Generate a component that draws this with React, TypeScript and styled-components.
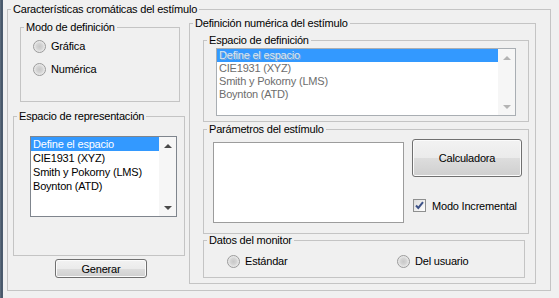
import React from "react";
import styled, { createGlobalStyle } from "styled-components";

const GlobalStyle = createGlobalStyle`
  html, body {
    margin: 0;
    padding: 0;
    background: #f0f0f0;
  }
  body {
    font-family: "Liberation Sans", Arial, sans-serif;
    font-size: 11px;
    letter-spacing: -0.2px;
    color: #000000;
  }
`;

const espacios = ["Define el espacio", "CIE1931 (XYZ)", "Smith y Pokorny (LMS)", "Boynton (ATD)"];

function Radio({ label }: { label: string }) {
  return (
    <RadioRow>
      <RadioDot />
      <span>{label}</span>
    </RadioRow>
  );
}

function ListBox(props: { w: number; h: number; rowH: number; disabled?: boolean }) {
  return (
    <ListFrame $w={props.w} $h={props.h} $disabled={props.disabled}>
      <ListItems>
        {espacios.map((item, i) => (
          <ListItem key={item} $rowH={props.rowH} $selected={i === 0} $disabled={props.disabled}>
            {item}
          </ListItem>
        ))}
      </ListItems>
      <ScrollBar>
        <ScrollButton>
          <Arrow $up $disabled={props.disabled} />
        </ScrollButton>
        <ScrollButton>
          <Arrow $disabled={props.disabled} />
        </ScrollButton>
      </ScrollBar>
    </ListFrame>
  );
}

export default function App() {
  return (
    <Window>
      <GlobalStyle />
      <Strip />
      <Main>
        <OuterGroup $w={544} $h={288}>
          <Legend>Características cromáticas del estímulo</Legend>
          <OuterBody>
            <LeftCol>
              <ModoGroup $w={160} $h={81}>
                <Legend>Modo de definición</Legend>
                <RadioStack>
                  <Radio label="Gráfica" />
                  <Radio label="Numérica" />
                </RadioStack>
              </ModoGroup>
              <RepresentacionGroup $w={172} $h={146}>
                <Legend>Espacio de representación</Legend>
                <RepresentacionBody>
                  <ListBox w={147} h={81} rowH={14} />
                </RepresentacionBody>
              </RepresentacionGroup>
              <GenerarButton>Generar</GenerarButton>
            </LeftCol>
            <NumericaGroup $w={347} $h={267}>
              <Legend>Definición numérica del estímulo</Legend>
              <NumericaBody>
                <DefinicionGroup $w={326} $h={88}>
                  <Legend>Espacio de definición</Legend>
                  <DefinicionBody>
                    <ListBox w={300} h={68} rowH={13} disabled />
                  </DefinicionBody>
                </DefinicionGroup>
                <ParametrosGroup $w={326} $h={111}>
                  <Legend>Parámetros del estímulo</Legend>
                  <ParametrosBody>
                    <ParamBox />
                    <SideCol>
                      <CalcButton>Calculadora</CalcButton>
                      <CheckRow>
                        <CheckBox>
                          <svg width="11" height="11" viewBox="0 0 11 11">
                            <path d="M2 5.5 L4.3 8 L9 2.2" fill="none" stroke="#3d5288" strokeWidth="2" />
                          </svg>
                        </CheckBox>
                        <span>Modo Incremental</span>
                      </CheckRow>
                    </SideCol>
                  </ParametrosBody>
                </ParametrosGroup>
                <MonitorGroup $w={322} $h={44}>
                  <Legend>Datos del monitor</Legend>
                  <MonitorBody>
                    <Radio label="Estándar" />
                    <Radio label="Del usuario" />
                  </MonitorBody>
                </MonitorGroup>
              </NumericaBody>
            </NumericaGroup>
          </OuterBody>
        </OuterGroup>
      </Main>
    </Window>
  );
}

const Window = styled.div`
  display: flex;
  width: 559px;
  height: 298px;
  background: #f0f0f0;
  overflow: hidden;
`;

const Strip = styled.div`
  width: 3px;
  background: linear-gradient(90deg, #6f7d8c 0, #465668 1px, #4d5d70 3px);
`;

const Main = styled.div`
  padding: 3px 0 0 4px;
`;

const Group = styled.fieldset<{ $w: number; $h: number }>`
  box-sizing: border-box;
  width: ${(p) => p.$w}px;
  height: ${(p) => p.$h}px;
  min-width: 0;
  margin: 0;
  padding: 0;
  border: 1px solid #c4c4c4;
`;

const Legend = styled.legend`
  margin-left: 3px;
  padding: 0 2px;
  font-size: 11px;
  line-height: 13px;
`;

const OuterGroup = styled(Group)``;

const OuterBody = styled.div`
  display: flex;
  padding-left: 5px;
`;

const LeftCol = styled.div`
  display: flex;
  flex-direction: column;
  width: 172px;
`;

const ModoGroup = styled(Group)`
  margin: 5px 0 0 7px;
`;

const RadioStack = styled.div`
  display: flex;
  flex-direction: column;
  gap: 10px;
  padding: 6px 0 0 12px;
`;

const RadioRow = styled.label`
  display: flex;
  align-items: center;
  gap: 5px;
  height: 13px;
  line-height: 13px;
`;

const RadioDot = styled.span`
  box-sizing: border-box;
  width: 13px;
  height: 13px;
  border-radius: 50%;
  border: 1px solid #9a9a9a;
  background: radial-gradient(circle, #c8c8c8 0, #d4d4d4 3px, #e6e6e6 5px, #f4f4f4 6px);
`;

const RepresentacionGroup = styled(Group)`
  margin-top: 8px;
`;

const RepresentacionBody = styled.div`
  padding: 13px 0 0 16px;
`;

const ListFrame = styled.div<{ $w: number; $h: number; $disabled?: boolean }>`
  box-sizing: border-box;
  display: flex;
  width: ${(p) => p.$w}px;
  height: ${(p) => p.$h}px;
  border: 1px solid ${(p) => (p.$disabled ? "#a9aeb3" : "#7f858d")};
  background: #ffffff;
`;

const ListItems = styled.div`
  flex: 1;
`;

const ListItem = styled.div<{ $rowH: number; $selected?: boolean; $disabled?: boolean }>`
  height: ${(p) => p.$rowH}px;
  line-height: ${(p) => p.$rowH}px;
  padding-left: 2px;
  white-space: nowrap;
  background: ${(p) => (p.$selected ? "#3399ff" : "transparent")};
  color: ${(p) => (p.$selected ? (p.$disabled ? "#dde6ef" : "#ffffff") : p.$disabled ? "#6d6d6d" : "#000000")};
  text-shadow: ${(p) => (p.$selected && p.$disabled ? "1px 1px 0 #7fa8d4" : "none")};
`;

const ScrollBar = styled.div`
  display: flex;
  flex-direction: column;
  justify-content: space-between;
  width: 17px;
  background: #f6f6f6;
`;

const ScrollButton = styled.div`
  display: flex;
  align-items: center;
  justify-content: center;
  height: 17px;
`;

const Arrow = styled.span<{ $up?: boolean; $disabled?: boolean }>`
  width: 0;
  height: 0;
  border-left: 4px solid transparent;
  border-right: 4px solid transparent;
  ${(p) => (p.$up ? "border-bottom" : "border-top")}: 4px solid ${(p) => (p.$disabled ? "#b4b4b4" : "#4a4a4a")};
`;

const WinButton = styled.button`
  box-sizing: border-box;
  padding: 0;
  font-family: "Liberation Sans", Arial, sans-serif;
  font-size: 11px;
  letter-spacing: -0.2px;
  color: #000000;
  border: 1px solid #707070;
  border-radius: 3px;
  background: linear-gradient(#f2f2f2 0%, #ebebeb 50%, #dddddd 51%, #cfcfcf 100%);
  box-shadow: inset 0 0 0 1px #fbfbfb;
`;

const GenerarButton = styled(WinButton)`
  width: 92px;
  height: 19px;
  margin: 3px 0 0 42px;
`;

const NumericaGroup = styled(Group)`
  margin: 1px 0 0 4px;
`;

const NumericaBody = styled.div`
  display: flex;
  flex-direction: column;
  padding-left: 13px;
`;

const DefinicionGroup = styled(Group)`
  margin-top: 4px;
`;

const DefinicionBody = styled.div`
  padding: 1px 0 0 12px;
`;

const ParametrosGroup = styled(Group)`
  margin-top: 1px;
`;

const ParametrosBody = styled.div`
  display: flex;
  padding: 3px 0 0 9px;
`;

const ParamBox = styled.div`
  box-sizing: border-box;
  width: 191px;
  height: 81px;
  margin-top: 3px;
  border: 1px solid #9c9c9c;
  background: #ffffff;
`;

const SideCol = styled.div`
  display: flex;
  flex-direction: column;
  margin-left: 8px;
`;

const CalcButton = styled(WinButton)`
  width: 110px;
  height: 38px;
`;

const CheckRow = styled.label`
  display: flex;
  align-items: center;
  gap: 6px;
  margin: 22px 0 0 1px;
  height: 13px;
`;

const CheckBox = styled.span`
  box-sizing: border-box;
  display: flex;
  align-items: center;
  justify-content: center;
  width: 13px;
  height: 13px;
  border: 1px solid #8e8f8f;
  background: linear-gradient(135deg, #dcdcdc, #ffffff);
`;

const MonitorGroup = styled(Group)``;

const MonitorBody = styled.div`
  display: grid;
  grid-template-columns: 170px auto;
  padding: 8px 0 0 23px;
`;
